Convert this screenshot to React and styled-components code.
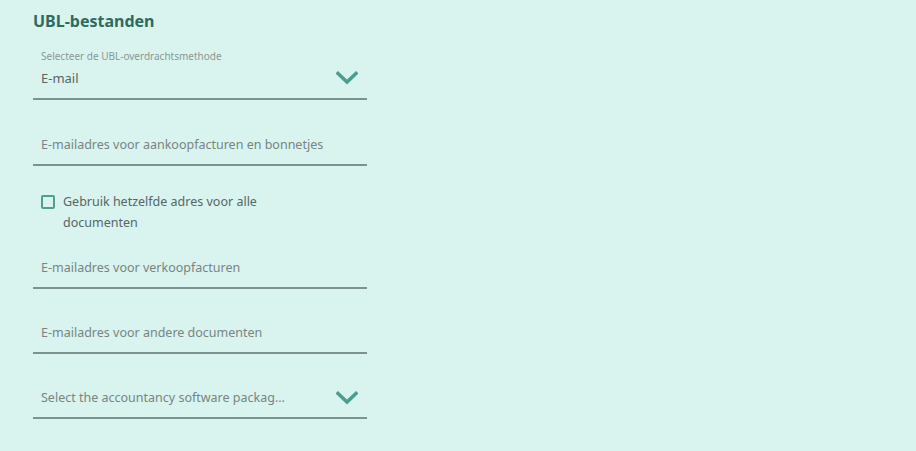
import styled, { createGlobalStyle } from "styled-components";

const GlobalStyle = createGlobalStyle`
  html, body {
    margin: 0;
    padding: 0;
    background: #d9f3ef;
  }
  body {
    font-family: "Noto Sans", "Open Sans", sans-serif;
  }
`;

const Chevron = () => (
  <svg width="22" height="14" viewBox="0 0 22 14" fill="none">
    <path
      d="M2 2.5 L11 11 L20 2.5"
      stroke="#4a9e90"
      strokeWidth="3.6"
      strokeLinecap="square"
    />
  </svg>
);

const App = () => {
  return (
    <>
      <GlobalStyle />
      <Page>
        <Title>UBL-bestanden</Title>
        <Form>
          <SelectField>
            <FieldLabel>Selecteer de UBL-overdrachtsmethode</FieldLabel>
            <ValueRow>
              <Value>E-mail</Value>
              <Chevron />
            </ValueRow>
          </SelectField>

          <TextField top={36}>
            <Placeholder>E-mailadres voor aankoopfacturen en bonnetjes</Placeholder>
          </TextField>

          <CheckRow>
            <CheckBox />
            <CheckText>Gebruik hetzelfde adres voor alle documenten</CheckText>
          </CheckRow>

          <TextField top={26}>
            <Placeholder>E-mailadres voor verkoopfacturen</Placeholder>
          </TextField>

          <TextField top={35}>
            <Placeholder>E-mailadres voor andere documenten</Placeholder>
          </TextField>

          <TextField top={35}>
            <ValueRow>
              <Placeholder>Select the accountancy software packag...</Placeholder>
              <Chevron />
            </ValueRow>
          </TextField>
        </Form>
      </Page>
    </>
  );
};

export default App;

const Page = styled.div`
  min-height: 100vh;
  box-sizing: border-box;
  padding: 10px 33px;
  background: #d9f3ef;
`;

const Title = styled.h2`
  margin: 0;
  font-family: "Noto Sans", sans-serif;
  font-size: 16px;
  font-weight: 700;
  line-height: 22px;
  color: #2e6b5f;
`;

const Form = styled.div`
  width: 334px;
  display: flex;
  flex-direction: column;
`;

const SelectField = styled.div`
  padding: 17px 0 12px;
  border-bottom: 2px solid #7d918d;
`;

const FieldLabel = styled.div`
  padding-left: 8px;
  margin-bottom: 7px;
  font-size: 10px;
  line-height: 14px;
  color: #8a9896;
`;

const ValueRow = styled.div`
  display: flex;
  align-items: center;
  justify-content: space-between;
  padding-right: 9px;
`;

const Value = styled.div`
  padding-left: 8px;
  font-size: 13px;
  line-height: 16px;
  color: #566764;
`;

const TextField = styled.div`
  padding: ${(p) => p.top}px 0 10px;
  border-bottom: 2px solid #7d918d;
`;

const Placeholder = styled.div`
  padding-left: 8px;
  font-size: 12.5px;
  line-height: 18px;
  color: #7a8482;
`;

const CheckRow = styled.label`
  display: flex;
  align-items: flex-start;
  padding: 25px 0 0 8px;
`;

const CheckBox = styled.span`
  flex: none;
  width: 10px;
  height: 10px;
  margin-top: 4px;
  margin-right: 8px;
  border: 2px solid #4f9e90;
  border-radius: 2px;
`;

const CheckText = styled.span`
  max-width: 205px;
  font-size: 12.5px;
  line-height: 21px;
  color: #566764;
`;
